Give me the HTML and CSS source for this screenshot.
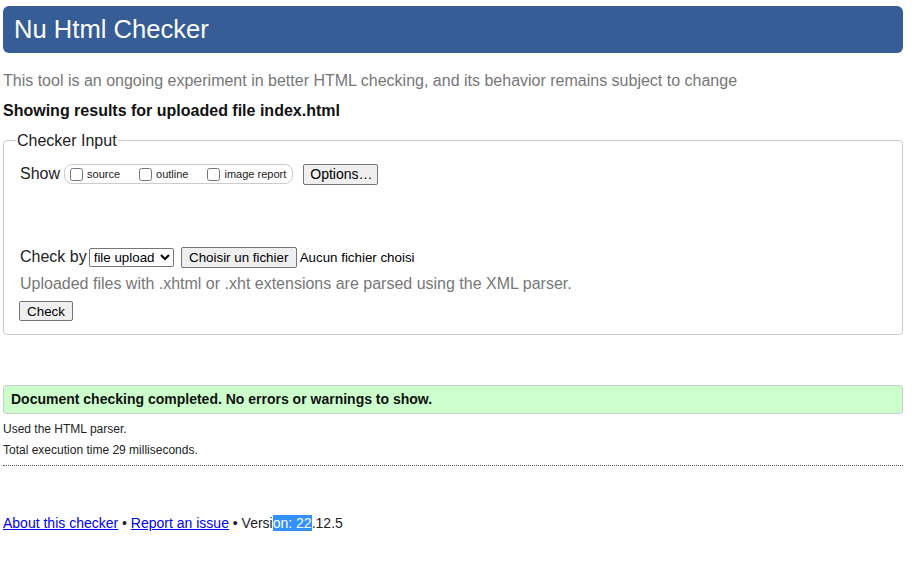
FILE: index.html
```html
<!DOCTYPE html>
<html lang="en">
<head>
<meta charset="utf-8">
<title>Nu Html Checker</title>
<link rel="stylesheet" href="styles.css">
</head>
<body>
<h1 class="title">Nu Html Checker</h1>
<p class="intro">This tool is an ongoing experiment in better HTML checking, and its behavior remains subject to change</p>
<p class="showing">Showing results for uploaded file index.html</p>
<fieldset class="input">
  <legend>Checker Input</legend>
  <div class="show-row">
    <span class="label">Show</span>
    <span class="opts">
      <label class="opt"><input type="checkbox">source</label>
      <label class="opt"><input type="checkbox">outline</label>
      <label class="opt"><input type="checkbox">image report</label>
    </span>
    <button class="btn options">Options…</button>
  </div>
  <div class="check-row">
    <span class="label by">Check by</span>
    <select class="sel"><option>file upload</option></select>
    <button class="btn file">Choisir un fichier</button>
    <span class="nofile">Aucun fichier choisi</span>
  </div>
  <p class="note">Uploaded files with .xhtml or .xht extensions are parsed using the XML parser.</p>
  <button class="btn check">Check</button>
</fieldset>
<div class="success">Document checking completed. No errors or warnings to show.</div>
<p class="details">Used the HTML parser.</p>
<p class="details">Total execution time 29 milliseconds.</p>
<hr class="sep">
<p class="footer"><a href="#">About this checker</a> • <a href="#">Report an issue</a> • Versi<span class="sel-hl">on: 22</span>.12.5</p>
</body>
</html>
```
FILE: styles.css
```css
html, body {
  background: #fff;
}
body {
  margin: 0;
  padding: 6px 12px 0 3px;
  font-family: "Liberation Sans", Arial, sans-serif;
  color: #000;
}
.title {
  margin: 0;
  height: 47px;
  line-height: 46px;
  background: #365d95;
  color: #fff;
  border-radius: 6px;
  font-size: 25.6px;
  font-weight: normal;
  padding-left: 11px;
}
.intro {
  margin: 18px 0 0;
  font-size: 16px;
  line-height: 19px;
  color: #777;
}
.showing {
  margin: 11px 0 0;
  font-size: 16px;
  line-height: 19px;
  font-weight: bold;
  color: #111;
}
.input {
  margin: 11px 0 0;
  padding: 13px 15px 13px 16px;
  border: 1px solid #ccc;
  border-radius: 4px;
  min-width: 0;
}
.input legend {
  margin-left: -4px;
  padding: 0 1px;
  font-size: 16px;
  line-height: 19px;
  color: #222;
}
.show-row, .check-row {
  display: flex;
  align-items: center;
  height: 22px;
}
.label {
  font-size: 16px;
  color: #222;
  margin-right: 4px;
}
.label.by {
  margin-right: 2px;
}
.opts {
  display: inline-flex;
  align-items: center;
  height: 18px;
  border: 1px solid #ccc;
  border-radius: 8px;
  padding: 0 6px 0 0;
  margin-right: 10px;
}
.opt {
  display: inline-flex;
  align-items: center;
  font-size: 11px;
  color: #222;
  margin-right: 14px;
}
.opt:last-child {
  margin-right: 0;
}
.opt input {
  margin: 0 4px 0 5px;
  width: 13px;
  height: 13px;
}
.btn {
  font-family: "Liberation Sans", Arial, sans-serif;
  font-size: 13.33px;
  color: #000;
  background: #efefef;
  border: 1px solid #767676;
  border-radius: 2px;
  padding: 1px 6px;
  height: 21px;
}
.options {
  width: 75px;
  font-size: 14px;
}
.check-row {
  margin-top: 61px;
}
.sel {
  font-family: "Liberation Sans", Arial, sans-serif;
  font-size: 13.33px;
  height: 19px;
  width: 85px;
  margin: 0 7px 0 0;
  border: 1px solid #767676;
  border-radius: 2px;
  background: #fff;
  color: #000;
}
.file {
  width: 116px;
  margin-right: 3px;
}
.nofile {
  font-size: 13.33px;
  color: #000;
}
.note {
  margin: 6px 0 0;
  font-size: 16px;
  line-height: 19px;
  color: #777;
}
.check {
  margin-top: 8px;
  margin-left: -1px;
  width: 54px;
  height: 20px;
}
.success {
  margin-top: 50px;
  height: 27px;
  line-height: 27px;
  background: #ccffcc;
  border: 1px solid #ccc;
  border-radius: 3px;
  padding-left: 7px;
  font-size: 14px;
  font-weight: bold;
  color: #111;
}
.details {
  margin: 8px 0 0;
  font-size: 12px;
  line-height: 15px;
  color: #222;
}
.details + .details {
  margin-top: 6px;
}
.sep {
  margin: 7px 0 0;
  border: 0;
  border-top: 1px dotted #555;
  height: 0;
}
.footer {
  margin: 49px 0 0;
  font-size: 14px;
  line-height: 17px;
  color: #222;
}
.footer a {
  color: #00e;
}
.sel-hl {
  background: #3390ff;
  color: #fff;
}
```
